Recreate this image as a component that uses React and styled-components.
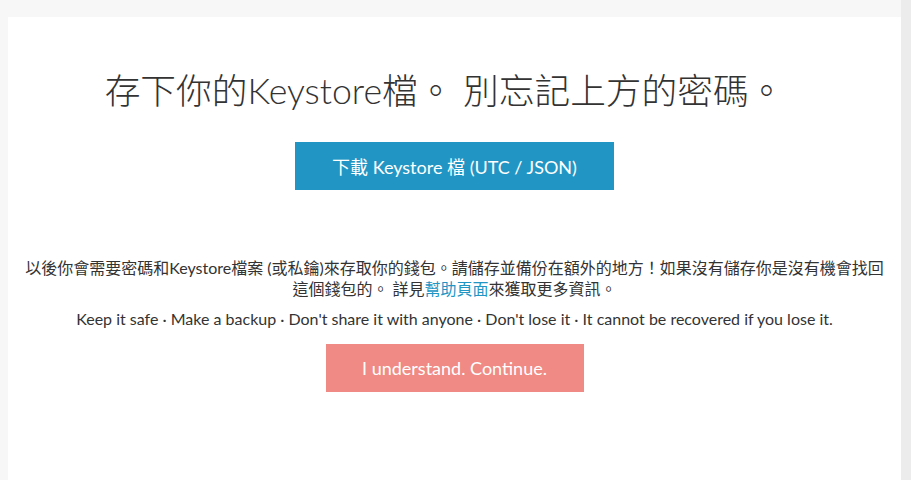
import React from 'react';
import styled, { createGlobalStyle } from 'styled-components';

const GlobalStyle = createGlobalStyle`
  html, body {
    margin: 0;
    padding: 0;
    background: #f7f7f7;
  }
  body {
    font-family: Lato, "Noto Sans CJK TC", sans-serif;
    color: #333;
  }
`;

const Page = styled.div`
  display: flex;
  height: 480px;
  padding: 17px 10px 0 8px;
  box-sizing: border-box;
  background: linear-gradient(to right, #f7f7f7 0, #f7f7f7 901px, #ececec 901px);
`;

const Card = styled.div`
  flex: 1;
  background: #fff;
  display: flex;
  flex-direction: column;
  align-items: center;
  padding-top: 50px;
  text-align: center;
`;

const Heading = styled.h1`
  margin: 0;
  padding-right: 20px;
  font-family: Lato, "Noto Sans CJK TC", sans-serif;
  font-weight: 300;
  font-size: 35.7px;
  line-height: 48px;
  color: #333;
`;

const Button = styled.button`
  border: none;
  color: #fff;
  font-family: Lato, "Noto Sans CJK TC", sans-serif;
  font-weight: 400;
  font-size: 18px;
  height: 48px;
  padding: 0;
  width: ${p => p.$width}px;
  margin-top: ${p => p.$top}px;
  background: ${p => p.$bg};
  cursor: pointer;
`;

const Notice = styled.p`
  margin: 67px 0 0;
  font-size: 16px;
  line-height: 21px;
  width: 870px;
  color: #333;
`;

const Link = styled.a`
  color: #2196c4;
  text-decoration: none;
`;

const Tips = styled.p`
  margin: 9px 0 0;
  font-size: 16px;
  line-height: 21px;
  color: #333;
  font-weight: 400;
`;

export default function App() {
  return (
    <>
      <GlobalStyle />
      <Page>
        <Card>
          <Heading>存下你的Keystore檔。 別忘記上方的密碼。</Heading>
          <Button $bg="#2196c4" $width={319} $top={27}>
            下載 Keystore 檔 (UTC / JSON)
          </Button>
          <Notice>
            以後你會需要密碼和Keystore檔案 (或私鑰)來存取你的錢包。請儲存並備份在額外的地方！如果沒有儲存你是沒有機會找回這個錢包的。 詳見<Link href="#">幫助頁面</Link>來獲取更多資訊。
          </Notice>
          <Tips>
            Keep it safe · Make a backup · Don't share it with anyone · Don't lose it · It cannot be recovered if you lose it.
          </Tips>
          <Button $bg="#f08a84" $width={258} $top={15}>
            I understand. Continue.
          </Button>
        </Card>
      </Page>
    </>
  );
}
